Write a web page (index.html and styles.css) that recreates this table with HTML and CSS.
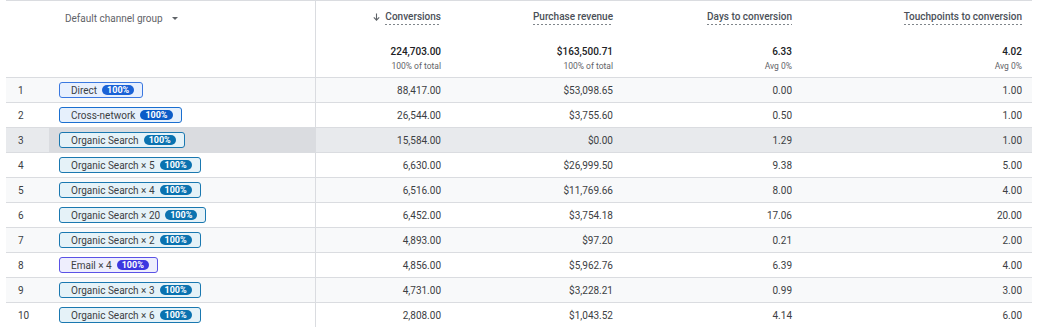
FILE: index.html
```html
<!DOCTYPE html>
<html>
<head>
<meta charset="utf-8">
<link rel="stylesheet" href="styles.css">
</head>
<body>
<table class="report">
  <colgroup>
    <col class="c-idx"><col class="c-dim"><col class="c-conv"><col class="c-rev"><col class="c-days"><col class="c-touch">
  </colgroup>
  <thead>
    <tr>
      <th class="h-idx"></th>
      <th class="h-dim"><span class="dim-label">Default channel group</span><span class="caret"></span></th>
      <th class="h-num divider">
        <div class="label-row"><svg class="sort" width="7" height="8" viewBox="0 0 7 8"><path d="M3.5 0.5V7M0.8 4.4L3.5 7.1L6.2 4.4" fill="none" stroke="#5f6368" stroke-width="1.1"/></svg><span class="label">Conversions</span></div>
        <div class="total">224,703.00</div>
        <div class="sub">100% of total</div>
      </th>
      <th class="h-num">
        <div class="label-row"><span class="label">Purchase revenue</span></div>
        <div class="total">$163,500.71</div>
        <div class="sub">100% of total</div>
      </th>
      <th class="h-num">
        <div class="label-row"><span class="label">Days to conversion</span></div>
        <div class="total">6.33</div>
        <div class="sub">Avg 0%</div>
      </th>
      <th class="h-num last">
        <div class="label-row"><span class="label">Touchpoints to conversion</span></div>
        <div class="total">4.02</div>
        <div class="sub">Avg 0%</div>
      </th>
    </tr>
  </thead>
  <tbody>
    <tr class="alt"><td class="idx">1</td><td class="dim"><span class="pill direct">Direct<span class="badge">100%</span></span></td><td class="num divider">88,417.00</td><td class="num">$53,098.65</td><td class="num">0.00</td><td class="num last">1.00</td></tr>
    <tr><td class="idx">2</td><td class="dim"><span class="pill cross">Cross-network<span class="badge">100%</span></span></td><td class="num divider">26,544.00</td><td class="num">$3,755.60</td><td class="num">0.50</td><td class="num last">1.00</td></tr>
    <tr class="hover"><td class="idx">3</td><td class="dim"><span class="pill organic">Organic Search<span class="badge">100%</span></span></td><td class="num divider">15,584.00</td><td class="num">$0.00</td><td class="num">1.29</td><td class="num last">1.00</td></tr>
    <tr><td class="idx">4</td><td class="dim"><span class="pill organic">Organic Search × 5<span class="badge">100%</span></span></td><td class="num divider">6,630.00</td><td class="num">$26,999.50</td><td class="num">9.38</td><td class="num last">5.00</td></tr>
    <tr class="alt"><td class="idx">5</td><td class="dim"><span class="pill organic">Organic Search × 4<span class="badge">100%</span></span></td><td class="num divider">6,516.00</td><td class="num">$11,769.66</td><td class="num">8.00</td><td class="num last">4.00</td></tr>
    <tr><td class="idx">6</td><td class="dim"><span class="pill organic">Organic Search × 20<span class="badge">100%</span></span></td><td class="num divider">6,452.00</td><td class="num">$3,754.18</td><td class="num">17.06</td><td class="num last">20.00</td></tr>
    <tr class="alt"><td class="idx">7</td><td class="dim"><span class="pill organic">Organic Search × 2<span class="badge">100%</span></span></td><td class="num divider">4,893.00</td><td class="num">$97.20</td><td class="num">0.21</td><td class="num last">2.00</td></tr>
    <tr><td class="idx">8</td><td class="dim"><span class="pill email">Email × 4<span class="badge">100%</span></span></td><td class="num divider">4,856.00</td><td class="num">$5,962.76</td><td class="num">6.39</td><td class="num last">4.00</td></tr>
    <tr class="alt"><td class="idx">9</td><td class="dim"><span class="pill organic">Organic Search × 3<span class="badge">100%</span></span></td><td class="num divider">4,731.00</td><td class="num">$3,228.21</td><td class="num">0.99</td><td class="num last">3.00</td></tr>
    <tr class="lastrow"><td class="idx">10</td><td class="dim"><span class="pill organic">Organic Search × 6<span class="badge">100%</span></span></td><td class="num divider">2,808.00</td><td class="num">$1,043.52</td><td class="num">4.14</td><td class="num last">6.00</td></tr>
  </tbody>
</table>
</body>
</html>
```
FILE: styles.css
```css
html, body {
  margin: 0;
  padding: 0;
  background: #fff;
}
body {
  padding-left: 6px;
  font-family: Roboto, "Liberation Sans", Arial, sans-serif;
  font-size: 10px;
  color: #3c4043;
}
.report {
  border-collapse: collapse;
  table-layout: fixed;
  width: 1026px;
}
.c-idx { width: 43px; }
.c-dim { width: 266px; }
.c-conv { width: 138px; }
.c-rev { width: 172px; }
.c-days { width: 179px; }
.c-touch { width: 228px; }

thead th {
  padding: 0;
  vertical-align: top;
  border-top: 1px solid #dadce0;
  border-bottom: 1px solid #dadce0;
  font-weight: normal;
}
.h-dim {
  text-align: left;
  padding: 11px 0 0 16px;
  line-height: 14px;
  color: #5f6368;
}
.dim-label { font-size: 10px; }
.caret {
  display: inline-block;
  width: 0;
  height: 0;
  margin-left: 9px;
  vertical-align: 2px;
  border-left: 3px solid transparent;
  border-right: 3px solid transparent;
  border-top: 3px solid #5f6368;
}
.h-num {
  text-align: right;
  padding: 9px 12px 5px 0;
}
.h-num.last { padding-right: 10px; }
.label-row {
  display: flex;
  justify-content: flex-end;
  align-items: flex-start;
  gap: 5px;
  height: 15px;
}
.sort {
  margin-top: 3px;
}
.label {
  font-size: 10px;
  font-weight: 500;
  line-height: 14px;
  color: #4b5058;
  background-image: linear-gradient(to right, #80868b 2px, transparent 2px);
  background-size: 4px 1px;
  background-repeat: repeat-x;
  background-position: left bottom;
  height: 15px;
}
.total {
  margin-top: 20px;
  font-size: 10px;
  font-weight: 500;
  line-height: 14px;
  color: #202124;
}
.sub {
  margin-top: 2px;
  font-size: 8.5px;
  line-height: 11px;
  color: #5f6368;
}
.divider { border-left: 1px solid #dadce0; }

tbody td {
  height: 24px;
  padding: 0;
  border-bottom: 1px solid #dadce0;
  vertical-align: middle;
  white-space: nowrap;
}
tbody tr.lastrow td { border-bottom: none; }
tbody tr.alt td { background: #f8f9fa; }
tbody tr.hover td { background: #e8eaed; }
tbody tr.hover td.dim { background: #dadce0; }
.idx { padding-left: 12px !important; }
.dim { padding-left: 10px !important; }
.num {
  text-align: right;
  padding-right: 12px !important;
}
.num.last { padding-right: 10px !important; }

.pill {
  display: inline-flex;
  align-items: center;
  box-sizing: border-box;
  height: 16px;
  padding: 0 8px 0 11px;
  gap: 5px;
  border: 1px solid;
  border-radius: 3px;
  font-size: 10px;
  color: #3c4043;
  vertical-align: middle;
}
.badge {
  display: inline-flex;
  align-items: center;
  height: 10px;
  padding: 0 5px;
  border-radius: 5px;
  font-size: 9px;
  font-weight: 700;
  color: #fff;
}
.direct { border-color: #3a78e0; background: #e8f0fe; }
.direct .badge { background: #1a62d6; }
.cross { border-color: #1a6fd0; background: #e6f0fc; }
.cross .badge { background: #0b5cc8; }
.organic { border-color: #1a78b0; background: #e5f2f8; }
.organic .badge { background: #0a72b0; }
.email { border-color: #5a52e6; background: #eeeefd; }
.email .badge { background: #3c37e0; }
```
